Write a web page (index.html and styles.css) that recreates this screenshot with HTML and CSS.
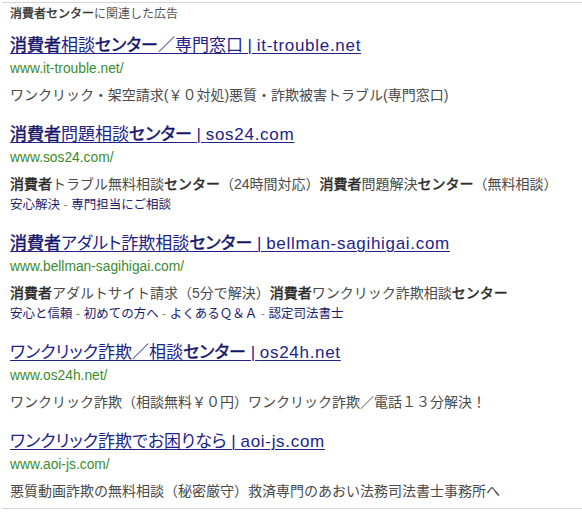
FILE: index.html
```html
<!DOCTYPE html>
<html lang="ja">
<head>
<meta charset="utf-8">
<link rel="stylesheet" href="styles.css">
</head>
<body>
<div class="ads">
  <div class="head"><b>消費者センター</b>に関連した広告</div>

  <div class="ad">
    <div class="title"><a><b>消費者</b>相談<b>センター</b>／専門窓口 | <span class="lat">it-trouble.net</span></a></div>
    <div class="url">www.it-trouble.net/</div>
    <div class="desc">ワンクリック・架空請求(￥０対処)悪質・詐欺被害トラブル(専門窓口)</div>
  </div>

  <div class="ad">
    <div class="title"><a><b>消費者</b>問題相談<b>センター</b> | <span class="lat">sos24.com</span></a></div>
    <div class="url">www.sos24.com/</div>
    <div class="desc"><b>消費者</b>トラブル無料相談<b>センター</b>（24時間対応）<b>消費者</b>問題解決<b>センター</b>（無料相談）</div>
    <div class="links"><a>安心解決</a><span class="sep"> - </span><a>専門担当にご相談</a></div>
  </div>

  <div class="ad">
    <div class="title"><a><b>消費者</b>アダルト詐欺相談<b>センター</b> | <span class="lat">bellman-sagihigai.com</span></a></div>
    <div class="url">www.bellman-sagihigai.com/</div>
    <div class="desc"><b>消費者</b>アダルトサイト請求（5分で解決）<b>消費者</b>ワンクリック詐欺相談<b>センター</b></div>
    <div class="links"><a>安心と信頼</a><span class="sep"> - </span><a>初めての方へ</a><span class="sep"> - </span><a>よくあるＱ＆Ａ</a><span class="sep"> - </span><a>認定司法書士</a></div>
  </div>

  <div class="ad">
    <div class="title"><a>ワンクリック詐欺／相談<b>センター</b> | <span class="lat">os24h.net</span></a></div>
    <div class="url">www.os24h.net/</div>
    <div class="desc">ワンクリック詐欺（相談無料￥０円）ワンクリック詐欺／電話１３分解決！</div>
  </div>

  <div class="ad">
    <div class="title"><a>ワンクリック詐欺でお困りなら | <span class="lat">aoi-js.com</span></a></div>
    <div class="url">www.aoi-js.com/</div>
    <div class="desc">悪質動画詐欺の無料相談（秘密厳守）救済専門のあおい法務司法書士事務所へ</div>
  </div>
</div>
</body>
</html>
```

FILE: styles.css
```css
html, body {
  margin: 0;
  padding: 0;
  background: #fff;
}
body {
  font-family: "Liberation Sans", "Noto Sans CJK JP", sans-serif;
  color: #444;
}
b {
  font-weight: normal;
  -webkit-text-stroke: 0.45px currentColor;
}
.ads {
  margin: 2px 0 0 2px;
  border-top: 1px solid #d4d4d4;
  border-bottom: 1px solid #d4d4d4;
  padding: 0 0 6px 8px;
}
.head {
  font-size: 12px;
  line-height: 22px;
  color: #555;
}
.head b {
  color: #333;
  -webkit-text-stroke: 0.35px currentColor;
}
.ad {
  margin-top: 9px;
}
.ad + .ad {
  margin-top: 17px;
}
.title {
  font-size: 17px;
  line-height: 24px;
  white-space: nowrap;
  font-feature-settings: "palt";
}
.title a {
  color: #22228a;
  text-decoration: underline;
  text-decoration-thickness: 1px;
  text-underline-offset: 2px;
}
.title b {
  color: #14146a;
}
.title .lat {
  letter-spacing: 0.7px;
}
.url {
  font-size: 13.8px;
  line-height: 22px;
  color: #3b8c2e;
}
.desc {
  margin-top: 4px;
  font-size: 14px;
  line-height: 22px;
  color: #4a4a4a;
  white-space: nowrap;
}
.desc b {
  color: #2a2a2a;
}
.links {
  font-size: 12.5px;
  line-height: 20px;
  white-space: nowrap;
}
.links a {
  color: #1c1c6c;
}
.links .sep {
  color: #888;
}
```
